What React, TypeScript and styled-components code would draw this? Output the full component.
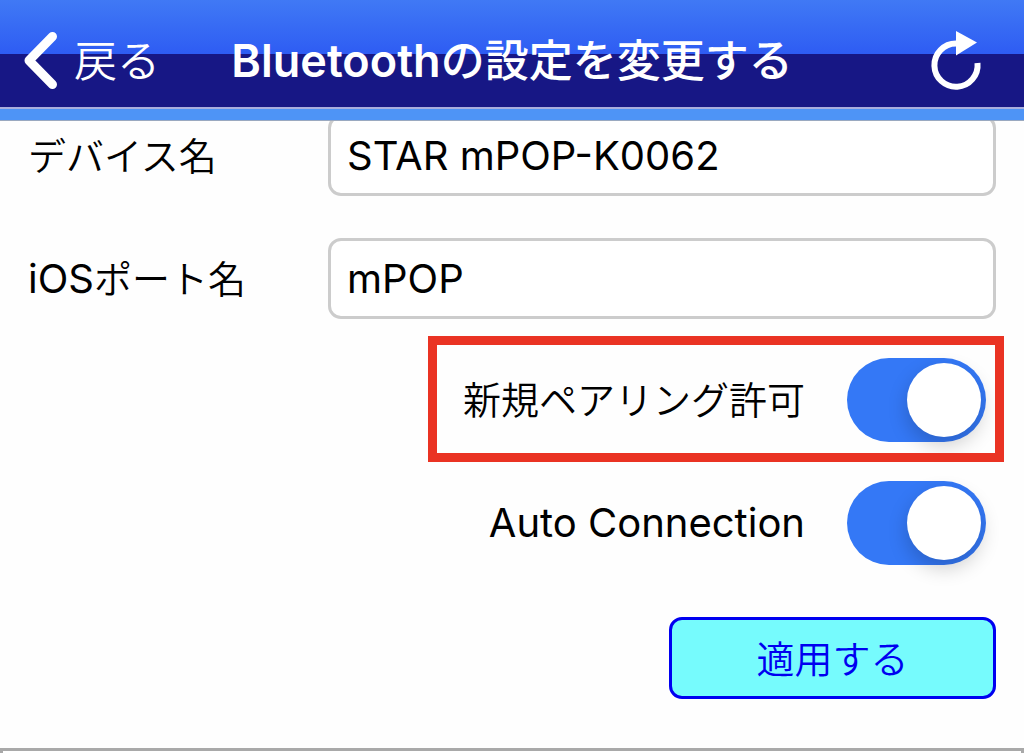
import React from "react";
import styled, { createGlobalStyle } from "styled-components";

const GlobalStyle = createGlobalStyle`
  *, *::before, *::after { box-sizing: border-box; }
  body {
    margin: 0;
    background: #fefefe;
    color: #000;
    font-family: Inter, "Noto Sans CJK JP", sans-serif;
    font-size: 38px;
  }
`;

const Page = styled.div`
  display: flex;
  flex-direction: column;
  min-height: 100vh;
`;

const Header = styled.header`
  position: fixed;
  top: 0;
  left: 0;
  right: 0;
  z-index: 1;
  border-bottom: 1px solid #9aa9c0;
`;

const TitleBar = styled.div`
  display: grid;
  grid-template-columns: 1fr auto 1fr;
  align-items: center;
  height: 109px;
  padding: 14px 24px 0;
  color: #fff;
  background: linear-gradient(#4079f5 0, #2e5cf3 54px, #171785 54px);
  border-bottom: 2px solid #a9aede;
`;

const Strip = styled.div`
  height: 11px;
  background: #4e94f6;
`;

const BarButton = styled.button<{ $end?: boolean }>`
  justify-self: ${(p) => (p.$end ? "end" : "start")};
  display: flex;
  align-items: center;
  gap: 16px;
  padding: ${(p) => (p.$end ? "0 16px 0 0" : "0")};
  border: 0;
  background: none;
  color: inherit;
  font: inherit;
  font-size: 43px;
  line-height: 60px;
  font-weight: 350;
  cursor: pointer;
`;

const Title = styled.h1`
  margin: 0;
  font-size: 45px;
  line-height: 60px;
  font-weight: 600;
  white-space: nowrap;
`;

const TitleJa = styled.span`
  font-size: 44px;
  font-weight: 500;
`;

const Form = styled.form`
  display: flex;
  flex-direction: column;
  padding: 115px 28px 49px;
`;

const Field = styled.div`
  display: flex;
  align-items: center;
  margin-bottom: 42px;

  &:nth-of-type(2) { margin-bottom: 26px; }
`;

const FieldLabel = styled.label`
  flex: 0 0 300px;
  line-height: 56px;
`;

const TextInput = styled.input`
  flex: 1;
  min-width: 0;
  height: 81px;
  padding: 0 16px;
  border: 3px solid #ccc;
  border-radius: 13px;
  background: #fff;
  color: #000;
  font: inherit;
  font-size: 40px;
`;

const Toggles = styled.div`
  display: flex;
  flex-direction: column;
  align-items: flex-end;
  gap: 15px;
`;

const ToggleRow = styled.div<{ $marked?: boolean }>`
  display: flex;
  align-items: center;
  gap: 42px;
  margin-right: 1px;
  padding: 13px 9px 11px 26px;
  outline: ${(p) => (p.$marked ? "9px solid #ea3323" : "none")};
`;

const ToggleLabel = styled.label<{ $large?: boolean }>`
  font-size: ${(p) => (p.$large ? "40px" : "38px")};
  line-height: 56px;
`;

const Switch = styled.input`
  appearance: none;
  display: flex;
  align-items: center;
  width: 139px;
  height: 84px;
  margin: 0;
  padding: 0 5px;
  border-radius: 42px;
  background: #b9b9be;
  cursor: pointer;

  &::before {
    content: "";
    width: 74px;
    height: 74px;
    border-radius: 50%;
    background: #fff;
    box-shadow: 0 8px 20px rgba(0, 0, 0, 0.2);
  }

  &:checked {
    justify-content: flex-end;
    background: #3478f6;
  }
`;

const ApplyButton = styled.button`
  align-self: flex-end;
  width: 327px;
  height: 82px;
  margin-top: 41px;
  padding: 0 0 4px;
  border: 3px solid #0000f0;
  border-radius: 13px;
  background: #76fbfd;
  color: #0000f0;
  font: inherit;
  font-weight: 350;
  cursor: pointer;
`;

const NextPanel = styled.section`
  flex: 1;
  border: 3px solid #a9a9a9;
  border-bottom: 0;
  background: #fff;
`;

/* Japanese runs are set in the light cut, Latin runs in the regular one. */
const Ja = styled.span`
  font-size: 38px;
  font-weight: 350;
`;

const Latin = styled.span`
  font-size: 40px;
`;

export default function App() {
  return (
    <Page>
      <GlobalStyle />
      <Header>
        <TitleBar>
          <BarButton type="button">
            <svg width="34" height="58" viewBox="0 0 34 58" aria-hidden="true">
              <path d="M28.5 4.500 5 28.500l23.500 24" fill="none" stroke="#fff" strokeWidth="9" strokeLinecap="round" strokeLinejoin="round" />
            </svg>
            戻る
          </BarButton>
          <Title>Bluetooth<TitleJa>の設定を変更する</TitleJa></Title>
          <BarButton type="button" $end aria-label="更新">
            <svg width="53" height="60" viewBox="0 0 53 60" aria-hidden="true">
              <path d="M46.5 32A21.6 21.6 0 1 1 25 12.500" fill="none" stroke="#fff" strokeWidth="6" />
              <path d="M25 0v24.500l21-13z" fill="#fff" />
            </svg>
          </BarButton>
        </TitleBar>
        <Strip />
      </Header>
      <Form onSubmit={(e) => e.preventDefault()}>
        <Field>
          <FieldLabel htmlFor="device"><Ja>デバイス名</Ja></FieldLabel>
          <TextInput id="device" type="text" defaultValue="STAR mPOP-K0062" />
        </Field>
        <Field>
          <FieldLabel htmlFor="port"><Latin>iOS</Latin><Ja>ポート名</Ja></FieldLabel>
          <TextInput id="port" type="text" defaultValue="mPOP" />
        </Field>
        <Toggles>
          <ToggleRow $marked>
            <ToggleLabel htmlFor="pairing"><Ja>新規ペアリング許可</Ja></ToggleLabel>
            <Switch id="pairing" type="checkbox" role="switch" defaultChecked />
          </ToggleRow>
          <ToggleRow>
            <ToggleLabel htmlFor="auto" $large>Auto Connection</ToggleLabel>
            <Switch id="auto" type="checkbox" role="switch" defaultChecked />
          </ToggleRow>
        </Toggles>
        <ApplyButton type="submit">適用する</ApplyButton>
      </Form>
      <NextPanel />
    </Page>
  );
}
